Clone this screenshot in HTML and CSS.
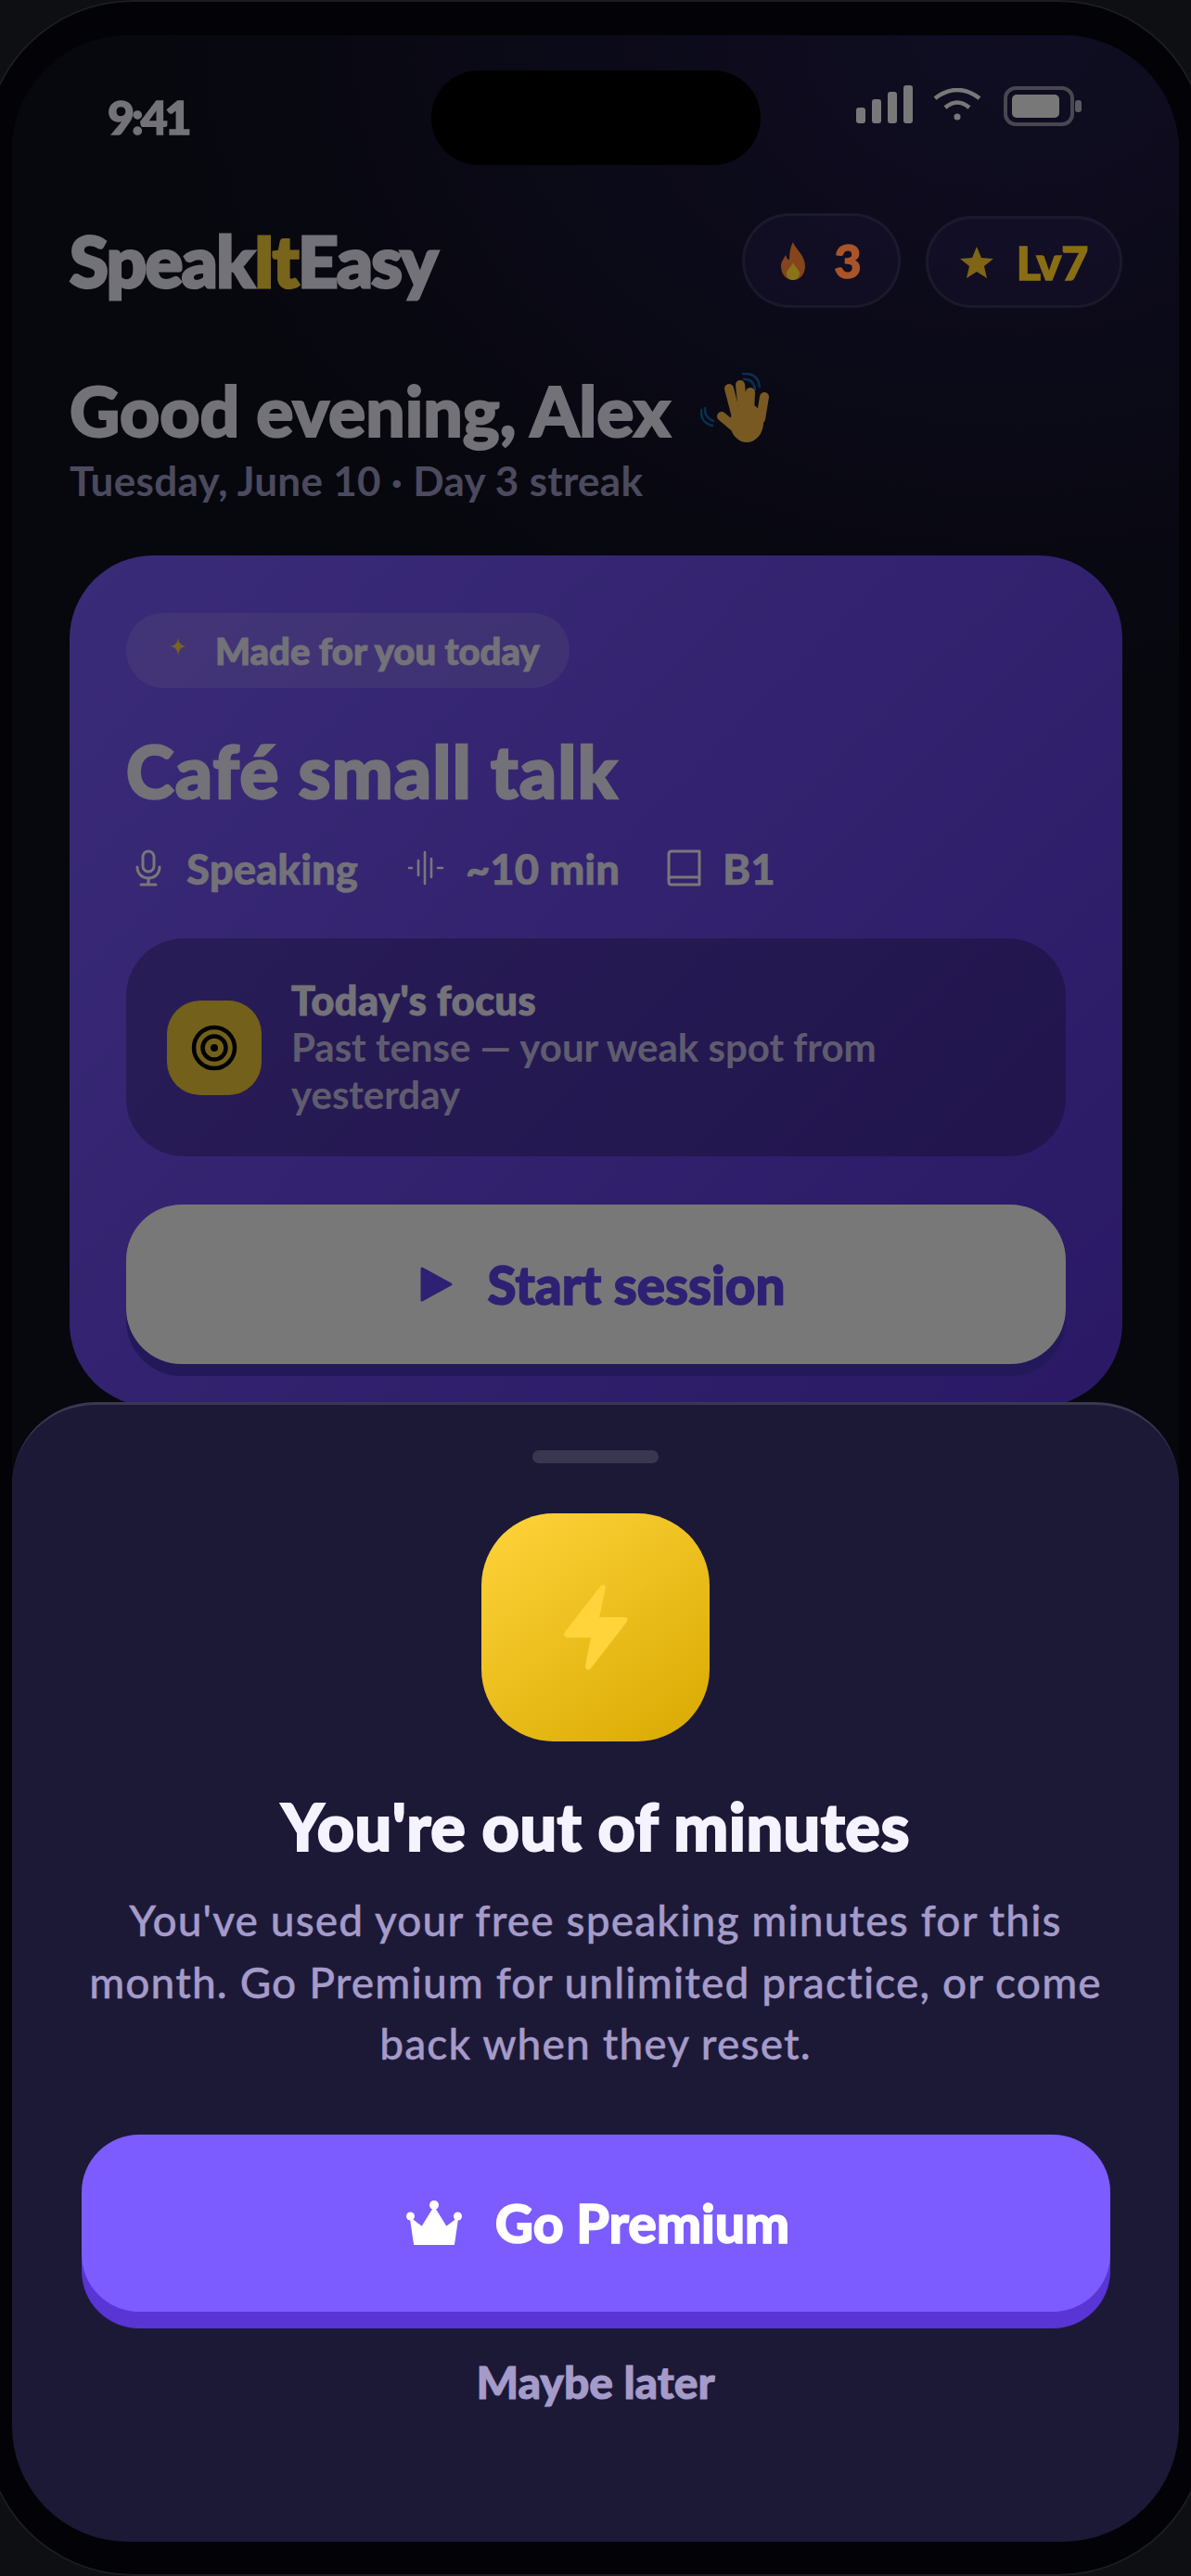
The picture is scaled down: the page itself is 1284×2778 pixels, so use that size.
FILE: index.html
```html
<!DOCTYPE html>
<html lang="en">
<head>
    <meta charset="UTF-8">
    <meta name="viewport" content="width=device-width, initial-scale=1.0">
    <title>SpeakItEasy</title>
    <link rel="stylesheet" href="styles.css">
</head>
<body>
    <div class="phone">
        <div class="screen">
            <!-- Status bar -->
            <div class="status-bar">
                <span class="status-time">9:41</span>
                <div class="island"></div>
                <div class="status-icons">
                    <svg class="icon-signal" width="62" height="41" viewBox="0 0 62 41" fill="#fff">
                        <rect x="0" y="24" width="10" height="17" rx="3"/>
                        <rect x="17" y="15" width="10" height="26" rx="3"/>
                        <rect x="34" y="7" width="10" height="34" rx="3"/>
                        <rect x="51" y="0" width="10" height="41" rx="3"/>
                    </svg>
                    <svg class="icon-wifi" width="52" height="35" viewBox="0 0 52 35" fill="none" stroke="#fff" stroke-width="4.5">
                        <path d="M2 11Q26 -7 50 11"/>
                        <path d="M13 21Q26 10 39 21"/>
                        <circle cx="26" cy="31" r="3.5" fill="#fff" stroke="none"/>
                    </svg>
                    <svg class="icon-battery" width="84" height="43" viewBox="0 0 84 43">
                        <rect x="2" y="2" width="72" height="39" rx="11" fill="none" stroke="#fff" stroke-opacity=".55" stroke-width="4"/>
                        <rect x="9" y="9" width="51" height="25" rx="5" fill="#fff"/>
                        <rect x="77" y="15" width="7" height="13" rx="3" fill="#fff" fill-opacity=".7"/>
                    </svg>
                </div>
            </div>

            <!-- Logo e chip -->
            <header class="top-row">
                <div class="logo">Speak<span class="logo-it">It</span>Easy</div>
                <div class="chips">
                    <div class="chip chip-streak">
                        <svg width="26" height="41" viewBox="0 0 26 41">
                            <path d="M13 0C15 7 26 14 26 26C26 35 20 41 13 41C6 41 0 35 0 26C0 21 3 18 5 14C6 17 7 19 9 19C9 12 10 5 13 0Z" fill="#84441c"/>
                            <path d="M13 22C15 27 20 30 20 34C20 38 17 41 13 41C9 41 6 38 6 34C6 30 11 27 13 22Z" fill="#8a7418"/>
                        </svg>
                        <span>3</span>
                    </div>
                    <div class="chip chip-level">
                        <svg width="36" height="34" viewBox="0 0 36 34">
                            <path d="M18 0L23 12L36 13L26 21L29 34L18 27L7 34L10 21L0 13L13 12Z" fill="#7f6514"/>
                        </svg>
                        <span>Lv7</span>
                    </div>
                </div>
            </header>

            <div class="greeting">
                <h1>Good evening, Alex
                    <svg class="wave" width="76" height="76" viewBox="0 0 76 76" fill="none">
                        <g class="wave-lines" stroke-linecap="round" stroke-width="2.4">
                            <path d="M47 7Q57 6 59 18"/>
                            <path d="M46 1Q62 0 64 15"/>
                            <path d="M5 38Q4 48 14 52"/>
                            <path d="M1 40Q0 54 13 57"/>
                        </g>
                        <g class="wave-hand" stroke-width="10" stroke-linecap="round">
                            <path d="M38 44L31 17"/>
                            <path d="M46 42L43 13"/>
                            <path d="M53 44L54 21"/>
                            <path d="M65 50L69 26"/>
                            <path d="M36 58L23 47"/>
                        </g>
                        <ellipse class="wave-palm" cx="50" cy="54" rx="18" ry="21"/>
                    </svg>
                </h1>
                <p>Tuesday, June 10 · Day 3 streak</p>
            </div>

            <!-- Card sessione -->
            <section class="session-card">
                <div class="made-pill">
                    <svg width="16" height="18" viewBox="0 0 16 18">
                        <path d="M8 0Q9 8 16 9Q9 10 8 18Q7 10 0 9Q7 8 8 0Z" fill="#ffd43b"/>
                    </svg>
                    <span>Made for you today</span>
                </div>
                <h2>Café small talk</h2>
                <div class="meta">
                    <div class="meta-item">
                        <svg width="28" height="40" viewBox="0 0 28 40" fill="none" stroke="#fff" stroke-width="3" stroke-linecap="round">
                            <rect x="8" y="2" width="12" height="22" rx="6"/>
                            <path d="M2 19C2 26 7 31 14 31C21 31 26 26 26 19"/>
                            <path d="M14 31V38M6 38H22"/>
                        </svg>
                        <span>Speaking</span>
                    </div>
                    <div class="meta-item">
                        <svg width="40" height="38" viewBox="0 0 40 38" fill="none" stroke="#fff" stroke-width="2.6" stroke-linecap="round">
                            <path d="M2 19H5M12 11V27M19 2V36M26 9V29M33 19H38"/>
                        </svg>
                        <span>~10 min</span>
                    </div>
                    <div class="meta-item">
                        <svg width="37" height="40" viewBox="0 0 37 40" fill="none" stroke="#fff" stroke-width="3" stroke-linejoin="round">
                            <path d="M5 2H35V38H5Q2 38 2 35V5Q2 2 5 2Z"/>
                            <path d="M2 32Q2 30 5 30H35"/>
                        </svg>
                        <span>B1</span>
                    </div>
                </div>
                <div class="focus-box">
                    <div class="focus-icon">
                        <svg width="50" height="50" viewBox="0 0 50 50" fill="none" stroke="#000" stroke-width="4.5">
                            <circle cx="25" cy="25" r="22"/>
                            <circle cx="25" cy="25" r="12.5"/>
                            <circle cx="25" cy="25" r="4" fill="#000" stroke="none"/>
                        </svg>
                    </div>
                    <div class="focus-text">
                        <h3>Today's focus</h3>
                        <p>Past tense — your weak spot from<br>yesterday</p>
                    </div>
                </div>
                <button class="btn-start">
                    <svg width="35" height="38" viewBox="0 0 35 38">
                        <path d="M2 2L33 19L2 36Z" fill="#6346f5" stroke="#6346f5" stroke-width="3" stroke-linejoin="round"/>
                    </svg>
                    <span>Start session</span>
                </button>
            </section>

            <div class="scrim"></div>

            <!-- Bottom sheet -->
            <div class="sheet">
                <div class="handle"></div>
                <div class="bolt-tile">
                    <svg width="71" height="94" viewBox="0 0 71 94">
                        <path d="M46 4L39 36H66Q72 36 68 42L30 91Q25 96 24 88L30 58H5Q-1 57 2 52L40 3Q45 -1 46 4Z" fill="#ffd43b"/>
                    </svg>
                </div>
                <h2>You're out of minutes</h2>
                <p>You've used your free speaking minutes for this<br>month. Go Premium for unlimited practice, or come<br>back when they reset.</p>
                <button class="btn-premium">
                    <svg width="60" height="48" viewBox="0 0 60 48" fill="#fff">
                        <circle cx="30" cy="5" r="5"/>
                        <circle cx="4.5" cy="17" r="4.5"/>
                        <circle cx="55.5" cy="17" r="4.5"/>
                        <path d="M5 20L17 29L30 8L43 29L55 20L51 47H9Z" stroke="#fff" stroke-width="2" stroke-linejoin="round"/>
                    </svg>
                    <span>Go Premium</span>
                </button>
                <a class="maybe-later">Maybe later</a>
            </div>
        </div>
    </div>
</body>
</html>
```

FILE: styles.css
```css
* {
    margin: 0;
    padding: 0;
    box-sizing: border-box;
}

body {
    width: 1284px;
    height: 2778px;
    overflow: hidden;
    background: #0e0f12;
    font-family: 'Lato', 'Open Sans', sans-serif;
    color: #f5f3ff;
}

svg {
    display: block;
    flex-shrink: 0;
}

.phone {
    width: 1318px;
    height: 2778px;
    margin-left: -17px;
    padding: 38px 30px 37px;
    background: #030307;
    border-radius: 160px;
    box-shadow: inset 0 0 0 2px #1c1d21;
}

.screen {
    position: relative;
    height: 100%;
    overflow: hidden;
    border-radius: 125px;
    background: radial-gradient(900px 700px at 85% 0, #221d4a, rgba(34, 29, 74, 0)), #10101f;
}

.status-bar {
    display: grid;
    grid-template-columns: 1fr 355px 1fr;
    padding-top: 38px;
}

.status-time {
    padding: 20px 0 0 103px;
    font-size: 50px;
    line-height: 60px;
    font-weight: 900;
    letter-spacing: -3.2px;
    -webkit-text-stroke: 1.5px currentColor;
}

.island {
    height: 102px;
    border-radius: 51px;
    background: #000;
    position: relative;
    z-index: 5;
}

.status-icons {
    display: flex;
    justify-content: flex-end;
    align-items: flex-start;
    gap: 21px;
    padding: 16px 105px 0 0;
}

.icon-wifi {
    margin-top: 3px;
}

.icon-battery {
    margin-left: 3px;
    margin-top: 1px;
}

.top-row {
    display: flex;
    justify-content: space-between;
    align-items: flex-end;
    padding: 0 61px 0 62px;
    margin-top: 52px;
}

.logo {
    font-size: 76px;
    line-height: 96px;
    font-weight: 900;
    letter-spacing: -1.5px;
    -webkit-text-stroke: 3px currentColor;
    align-self: center;
}

.logo-it {
    color: #ffd43b;
}

.chips {
    display: flex;
    align-items: flex-end;
    gap: 27px;
}

.chip {
    display: flex;
    align-items: center;
    justify-content: center;
    gap: 31px;
    border: 3px solid rgba(255, 255, 255, 0.1);
    border-radius: 52px;
    background: rgba(124, 92, 255, 0.1);
    font-size: 50px;
    font-weight: 900;
    -webkit-text-stroke: 1.5px currentColor;
}

.chip span, .chip svg {
    position: relative;
    z-index: 2;
}

.chip-streak {
    width: 171px;
    height: 102px;
    color: #a9552a;
}

.chip-level {
    width: 212px;
    height: 99px;
    gap: 25px;
    color: #8a6e14;
}

.greeting {
    padding: 0 62px;
    margin-top: 68px;
}

.greeting h1 {
    display: flex;
    align-items: center;
    gap: 32px;
    font-size: 75px;
    line-height: 84px;
    font-weight: 900;
    white-space: nowrap;
    -webkit-text-stroke: 2px currentColor;
}

.wave {
    margin-top: -4px;
}

.wave-lines path {
    stroke: #0d6cab;
}

.wave-hand path {
    stroke: #ffbd4a;
}

.wave-palm {
    fill: #ffbd4a;
}

.greeting p {
    margin-top: 7px;
    font-size: 44px;
    line-height: 54px;
    font-weight: 700;
    letter-spacing: 0.3px;
    color: #a09dc7;
}

.session-card {
    margin: 54px 61px 0 62px;
    padding: 62px 61px 46px;
    border-radius: 90px;
    background: linear-gradient(135deg, #7c5cff, #5a35d6);
}

.made-pill {
    display: inline-flex;
    align-items: center;
    gap: 32px;
    width: 478px;
    height: 81px;
    padding: 0 36px 0 48px;
    border-radius: 41px;
    background: rgba(255, 255, 255, 0.15);
    font-size: 40px;
    font-weight: 900;
    white-space: nowrap;
    -webkit-text-stroke: 1px currentColor;
}

.made-pill svg {
    margin-top: -10px;
}

.session-card h2 {
    margin-top: 45px;
    font-size: 78px;
    line-height: 88px;
    font-weight: 900;
    letter-spacing: 1.5px;
    -webkit-text-stroke: 2.5px currentColor;
}

.meta {
    display: flex;
    gap: 51px;
    margin-top: 36px;
    padding-left: 10px;
}

.meta-item {
    display: flex;
    align-items: center;
    gap: 23px;
    height: 50px;
    font-size: 45.5px;
    font-weight: 900;
    -webkit-text-stroke: 0.5px currentColor;
}

.meta-item:first-child {
    gap: 27px;
    margin-right: 2px;
}

.focus-box {
    display: flex;
    align-items: center;
    gap: 32px;
    height: 235px;
    margin-top: 51px;
    padding: 0 44px;
    border-radius: 62px;
    background: rgba(0, 0, 0, 0.25);
}

.focus-icon {
    display: flex;
    align-items: center;
    justify-content: center;
    width: 102px;
    height: 102px;
    border-radius: 36px;
    background: #f5cc38;
}

.focus-text h3 {
    font-size: 43px;
    line-height: 50px;
    font-weight: 900;
    letter-spacing: 0.6px;
    -webkit-text-stroke: 1px currentColor;
}

.focus-text p {
    font-size: 42px;
    line-height: 51px;
    font-weight: 700;
    opacity: 0.75;
}

.btn-start {
    display: flex;
    align-items: center;
    justify-content: center;
    gap: 38px;
    width: 100%;
    height: 172px;
    margin-top: 52px;
    padding-left: 14px;
    border: none;
    border-radius: 60px;
    background: #fff;
    box-shadow: 0 13px 0 #4c37bf;
    font-family: inherit;
    font-size: 56.5px;
    font-weight: 900;
    color: #6346f5;
    -webkit-text-stroke: 1.5px currentColor;
}

.scrim {
    position: absolute;
    inset: 0;
    z-index: 1;
    background: rgba(0, 0, 0, 0.53);
}

.sheet {
    position: absolute;
    left: 0;
    right: 0;
    top: 1474px;
    bottom: 0;
    z-index: 3;
    display: flex;
    flex-direction: column;
    align-items: center;
    background: #1c1937;
    border-top: 3px solid #3a3750;
    border-radius: 90px 90px 0 0;
}

.handle {
    width: 136px;
    height: 14px;
    margin-top: 49px;
    border-radius: 7px;
    background: #3a3650;
}

.bolt-tile {
    display: flex;
    align-items: center;
    justify-content: center;
    width: 246px;
    height: 246px;
    margin-top: 54px;
    border-radius: 78px;
    background: linear-gradient(145deg, #ffd43b, #d9a900);
}

.sheet h2 {
    margin-top: 46px;
    font-size: 70px;
    line-height: 90px;
    font-weight: 900;
    letter-spacing: 0.5px;
    -webkit-text-stroke: 2px currentColor;
}

.sheet p {
    margin-top: 24px;
    font-size: 46px;
    line-height: 66.5px;
    font-weight: 500;
    letter-spacing: 1.15px;
    text-align: center;
    color: #a59bc9;
    -webkit-text-stroke: 0.4px currentColor;
}

.btn-premium {
    display: flex;
    align-items: center;
    justify-content: center;
    gap: 36px;
    width: 1109px;
    height: 191px;
    margin-top: 64px;
    padding-left: 5px;
    border: none;
    border-radius: 62px;
    background: #7c5cff;
    box-shadow: 0 18px 0 #5835d4;
    font-family: inherit;
    font-size: 57px;
    font-weight: 900;
    color: #fff;
    -webkit-text-stroke: 1.5px currentColor;
}

.maybe-later {
    margin-top: 46px;
    font-size: 48px;
    line-height: 60px;
    font-weight: 900;
    color: #a59bc9;
    -webkit-text-stroke: 1px currentColor;
}
```
